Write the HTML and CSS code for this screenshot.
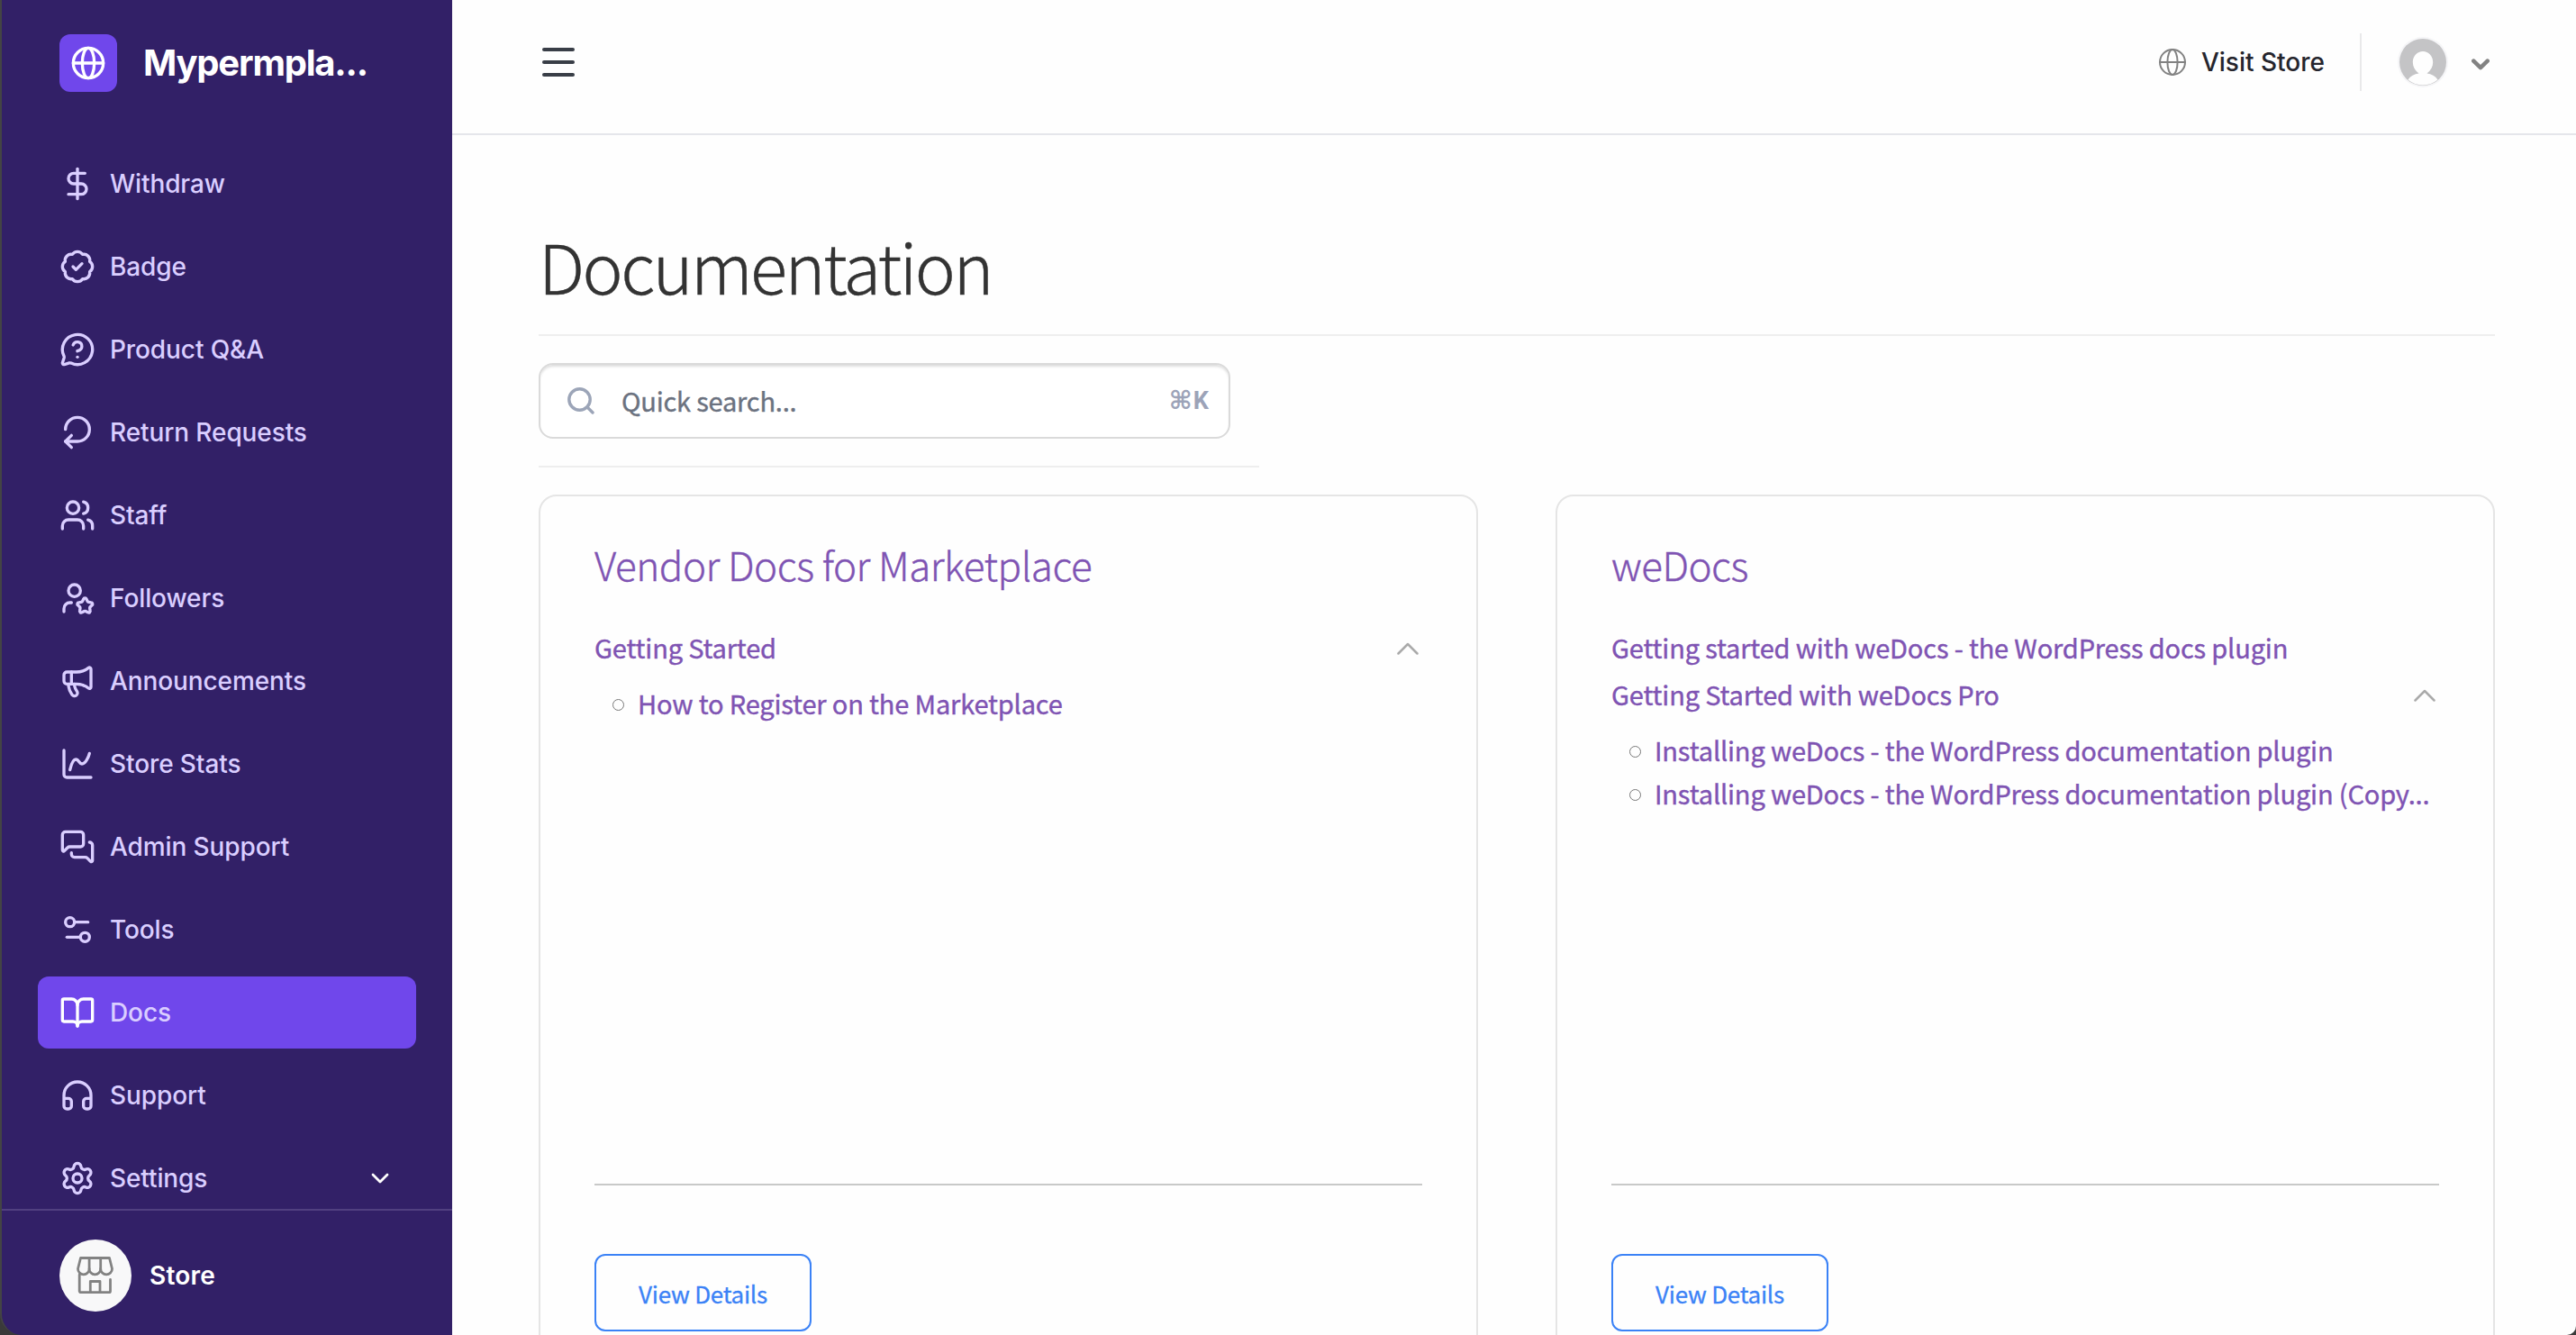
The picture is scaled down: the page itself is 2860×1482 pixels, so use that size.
FILE: index.html
```html
<!DOCTYPE html>
<html lang="en">
<head>
    <meta charset="UTF-8">
    <meta name="viewport" content="width=device-width, initial-scale=1.0">
    <title>Documentation</title>
    <link rel="stylesheet" href="styles.css">
</head>
<body>

    <div class="app">
        <aside class="sidebar">
            <div class="brand">
                <span class="brand-logo">
                    <svg class="icon" viewBox="0 0 24 24"><circle cx="12" cy="12" r="10"/><ellipse cx="12" cy="12" rx="4" ry="10"/><path d="M2 12h20"/></svg>
                </span>
                <span class="brand-name">Mypermpla...</span>
            </div>

            <nav class="menu">
                <a class="menu-item" href="#">
                    <svg class="icon" viewBox="0 0 24 24"><path d="M12 2v20"/><path d="M17 5H9.500a3.500 3.500 0 0 0 0 7h5a3.500 3.500 0 0 1 0 7H6"/></svg>
                    <span>Withdraw</span>
                </a>
                <a class="menu-item" href="#">
                    <svg class="icon" viewBox="0 0 24 24"><path d="M3.850 8.620a4 4 0 0 1 4.780-4.770 4 4 0 0 1 6.740 0 4 4 0 0 1 4.780 4.780 4 4 0 0 1 0 6.740 4 4 0 0 1-4.770 4.780 4 4 0 0 1-6.750 0 4 4 0 0 1-4.780-4.770 4 4 0 0 1 0-6.760Z"/><path d="m9 12 2 2 4-4"/></svg>
                    <span>Badge</span>
                </a>
                <a class="menu-item" href="#">
                    <svg class="icon" viewBox="0 0 24 24"><path d="M2.992 16.342a2 2 0 0 1 .094 1.167l-1.065 3.290a1 1 0 0 0 1.236 1.168l3.413-.998a2 2 0 0 1 1.099.092 10 10 0 1 0-4.777-4.719"/><path d="M9.090 9a3 3 0 0 1 5.830 1c0 2-3 3-3 3"/><path d="M12 17h.01"/></svg>
                    <span>Product Q&amp;A</span>
                </a>
                <a class="menu-item" href="#">
                    <svg class="icon" viewBox="0 0 24 24"><path d="M4 10a8 8 0 1 1 8 8H4"/><path d="m8 22-4-4 4-4"/></svg>
                    <span>Return Requests</span>
                </a>
                <a class="menu-item" href="#">
                    <svg class="icon" viewBox="0 0 24 24"><path d="M16 21v-2a4 4 0 0 0-4-4H6a4 4 0 0 0-4 4v2"/><circle cx="9" cy="7" r="4"/><path d="M22 21v-2a4 4 0 0 0-3-3.870"/><path d="M16 3.130a4 4 0 0 1 0 7.750"/></svg>
                    <span>Staff</span>
                </a>
                <a class="menu-item" href="#">
                    <svg class="icon" viewBox="0 0 24 24"><path d="M16.051 12.616a1 1 0 0 1 1.909.024l.737 1.452a1 1 0 0 0 .737.535l1.634.256a1 1 0 0 1 .588 1.806l-1.172 1.168a1 1 0 0 0-.282.866l.259 1.613a1 1 0 0 1-1.541 1.134l-1.465-.75a1 1 0 0 0-.912 0l-1.465.75a1 1 0 0 1-1.539-1.133l.258-1.613a1 1 0 0 0-.282-.866l-1.156-1.153a1 1 0 0 1 .572-1.822l1.633-.256a1 1 0 0 0 .737-.535z"/><path d="M8 15H7a4 4 0 0 0-4 4v2"/><circle cx="10" cy="7" r="4"/></svg>
                    <span>Followers</span>
                </a>
                <a class="menu-item" href="#">
                    <svg class="icon" viewBox="0 0 24 24"><path d="M11 6a13 13 0 0 0 8.400-2.800A1 1 0 0 1 21 4v12a1 1 0 0 1-1.600.8A13 13 0 0 0 11 14H5a2 2 0 0 1-2-2V8a2 2 0 0 1 2-2z"/><path d="M6 14a12 12 0 0 0 2.400 7.200 2 2 0 0 0 3.200-2.400A8 8 0 0 1 10 14"/><path d="M8 6v8"/></svg>
                    <span>Announcements</span>
                </a>
                <a class="menu-item" href="#">
                    <svg class="icon" viewBox="0 0 24 24"><path d="M3 3v16a2 2 0 0 0 2 2h16"/><path d="M7 16c.5-2 1.500-7 4-7 2 0 2 3 4 3 2.500 0 4.500-5 5-7"/></svg>
                    <span>Store Stats</span>
                </a>
                <a class="menu-item" href="#">
                    <svg class="icon" viewBox="0 0 24 24"><path d="M16 10a2 2 0 0 1-2 2H6.828a2 2 0 0 0-1.414.586l-2.202 2.202A.71.71 0 0 1 2 14.286V4a2 2 0 0 1 2-2h10a2 2 0 0 1 2 2z"/><path d="M20 9a2 2 0 0 1 2 2v10.286a.71.71 0 0 1-1.212.502l-2.202-2.202A2 2 0 0 0 17.172 19H10a2 2 0 0 1-2-2v-1"/></svg>
                    <span>Admin Support</span>
                </a>
                <a class="menu-item" href="#">
                    <svg class="icon" viewBox="0 0 24 24"><path d="M14 17H5"/><path d="M19 7h-9"/><circle cx="17" cy="17" r="3"/><circle cx="7" cy="7" r="3"/></svg>
                    <span>Tools</span>
                </a>
                <a class="menu-item active" href="#">
                    <svg class="icon" viewBox="0 0 24 24"><path d="M12 7v14"/><path d="M3 18a1 1 0 0 1-1-1V4a1 1 0 0 1 1-1h5a4 4 0 0 1 4 4 4 4 0 0 1 4-4h5a1 1 0 0 1 1 1v13a1 1 0 0 1-1 1h-6a3 3 0 0 0-3 3 3 3 0 0 0-3-3z"/></svg>
                    <span>Docs</span>
                </a>
                <a class="menu-item" href="#">
                    <svg class="icon" viewBox="0 0 24 24"><path d="M3 14h3a2 2 0 0 1 2 2v3a2 2 0 0 1-2 2H5a2 2 0 0 1-2-2v-7a9 9 0 0 1 18 0v7a2 2 0 0 1-2 2h-1a2 2 0 0 1-2-2v-3a2 2 0 0 1 2-2h3"/></svg>
                    <span>Support</span>
                </a>
                <a class="menu-item" href="#">
                    <svg class="icon" viewBox="0 0 24 24"><path d="M9.671 4.136a2.340 2.340 0 0 1 4.659 0 2.340 2.340 0 0 0 3.319 1.915 2.340 2.340 0 0 1 2.330 4.033 2.340 2.340 0 0 0 0 3.831 2.340 2.340 0 0 1-2.330 4.033 2.340 2.340 0 0 0-3.319 1.915 2.340 2.340 0 0 1-4.659 0 2.340 2.340 0 0 0-3.320-1.915 2.340 2.340 0 0 1-2.330-4.033 2.340 2.340 0 0 0 0-3.831A2.340 2.340 0 0 1 6.350 6.051a2.340 2.340 0 0 0 3.319-1.915"/><circle cx="12" cy="12" r="3"/></svg>
                    <span>Settings</span>
                    <svg class="menu-arrow" viewBox="0 0 20 12"><path d="m2 2 8 8 8-8"/></svg>
                </a>
            </nav>

            <div class="store">
                <span class="store-avatar">
                    <svg viewBox="0 0 42 42"><path d="M4.500 1.500h32l3 12a6.300 6.300 0 0 1-12.800 0 6.300 6.300 0 0 1-12.600 0 6.300 6.300 0 0 1-12.600 0z"/><path d="M14.100 1.500v12M26.700 1.500v12"/><path d="M3.200 20v18.200a1.500 1.500 0 0 0 1.500 1.500h31.300a1.500 1.500 0 0 0 1.500-1.500V25.500"/><path d="M15.300 39.700V27.500h10.700v12.200"/></svg>
                </span>
                <span class="store-name">Store</span>
            </div>
        </aside>

        <div class="page">
            <header class="topbar">
                <button class="menu-toggle" aria-label="Toggle menu"><span></span><span></span><span></span></button>
                <div class="topbar-right">
                    <a class="visit" href="#">
                        <svg class="icon" viewBox="0 0 30 30"><circle cx="15" cy="15" r="14"/><ellipse cx="15" cy="15" rx="5.600" ry="14"/><path d="M1 15h28"/></svg>
                        <span>Visit Store</span>
                    </a>
                    <div class="account">
                        <svg class="avatar" viewBox="0 0 56 56"><circle class="avatar-ring" cx="28" cy="28" r="28"/><circle class="avatar-bg" cx="28" cy="28" r="26"/><path class="avatar-user" d="M23.500 40.500C19 37 16.800 33 16.800 28c0-7 5-12 11.200-12s11.200 5 11.200 12c0 5-2.200 9-6.700 12.500 5 .8 9.500 3 12 7A26 26 0 0 1 11.500 47.500c2.500-4 7-6.200 12-7z"/></svg>
                        <svg class="account-arrow" viewBox="0 0 20 13"><path d="m2.300 2.600 7.700 7.500 7.700-7.500"/></svg>
                    </div>
                </div>
            </header>

            <main class="content">
                <h1 class="page-title">Documentation</h1>

                <div class="search">
                    <div class="search-box">
                        <svg class="search-icon" viewBox="0 0 30 30"><circle cx="13.500" cy="13.500" r="11.700"/><path d="m22 22 6 6"/></svg>
                        <span class="search-text">Quick search...</span>
                        <kbd class="search-key"><span>&#8984;</span>K</kbd>
                    </div>
                </div>

                <div class="docs">
                    <article class="card">
                        <h2><a href="#">Vendor Docs for Marketplace</a></h2>
                        <div class="card-body">
                            <div class="section-row">
                                <a href="#">Getting Started</a>
                                <svg class="chevron" viewBox="0 0 24 14"><path d="m1.500 12.500 10.500-10.500 10.500 10.500"/></svg>
                            </div>
                            <ul class="articles">
                                <li><a href="#">How to Register on the Marketplace</a></li>
                            </ul>
                        </div>
                        <div class="card-footer">
                            <a class="btn" href="#">View Details</a>
                        </div>
                    </article>

                    <article class="card">
                        <h2><a href="#">weDocs</a></h2>
                        <div class="card-body">
                            <div class="section-row">
                                <a href="#">Getting started with weDocs - the WordPress docs plugin</a>
                            </div>
                            <div class="section-row">
                                <a href="#">Getting Started with weDocs Pro</a>
                                <svg class="chevron" viewBox="0 0 24 14"><path d="m1.500 12.500 10.500-10.500 10.500 10.500"/></svg>
                            </div>
                            <ul class="articles">
                                <li><a href="#">Installing weDocs - the WordPress documentation plugin</a></li>
                                <li><a href="#">Installing weDocs - the WordPress documentation plugin (Copy...</a></li>
                            </ul>
                        </div>
                        <div class="card-footer">
                            <a class="btn" href="#">View Details</a>
                        </div>
                    </article>
                </div>
            </main>
        </div>
    </div>

</body>
</html>
```
FILE: styles.css
```css
/* Basic reset */
* {
    margin: 0;
    padding: 0;
    box-sizing: border-box;
}

body {
    font-family: Inter, sans-serif;
    background-color: #3a3a3a;
    overflow: hidden;
}

a {
    text-decoration: none;
    color: inherit;
}

ul {
    list-style-type: none;
}

svg {
    display: block;
    flex-shrink: 0;
    fill: none;
    stroke: currentColor;
    stroke-linecap: round;
    stroke-linejoin: round;
}

.app {
    display: flex;
    height: 1482px;
    border-left: 2px solid #444;
    border-radius: 0 0 10px 24px;
    overflow: hidden;
}

/* Sidebar */
.sidebar {
    display: flex;
    flex-direction: column;
    width: 500px;
    flex-shrink: 0;
    background-color: #322067;
    color: #daceff;
}

.icon {
    width: 40px;
    height: 40px;
    stroke-width: 2;
}

.brand {
    display: flex;
    align-items: center;
    gap: 29px;
    padding: 38px 64px 0;
}

.brand-logo {
    display: flex;
    align-items: center;
    justify-content: center;
    width: 64px;
    height: 64px;
    border-radius: 12px;
    background-color: #7047eb;
    color: #fff;
}

.brand-name {
    color: #fff;
    font-size: 40px;
    font-weight: 700;
    letter-spacing: -1.2px;
    line-height: 64px;
    white-space: nowrap;
}

.menu {
    display: flex;
    flex-direction: column;
    gap: 12px;
    height: 1240px;
    padding: 62px 40px 0;
    overflow: hidden;
}

.menu-item {
    display: flex;
    align-items: center;
    gap: 16px;
    height: 80px;
    flex-shrink: 0;
    padding: 0 30px 0 24px;
    border-radius: 12px;
    font-size: 28px;
    font-weight: 500;
    letter-spacing: -0.1px;
}

.menu-item.active {
    background-color: #7047eb;
}

.menu-item.active .icon {
    color: #fff;
}

.menu-arrow {
    width: 20px;
    height: 12px;
    margin-left: auto;
    color: #fff;
    stroke-width: 2.8;
}

.store {
    display: flex;
    align-items: center;
    gap: 20px;
    flex: 1;
    padding: 6px 64px 0;
    border-top: 2px solid #514080;
}

.store-avatar {
    display: flex;
    align-items: center;
    justify-content: center;
    width: 80px;
    height: 80px;
    border-radius: 50%;
    background-color: #f8f8f9;
    color: #828282;
}

.store-avatar svg {
    width: 42px;
    height: 42px;
    stroke-width: 2.8;
}

.store-name {
    color: #fff;
    font-size: 28px;
    font-weight: 600;
    letter-spacing: 0.2px;
}

/* Top bar */
.page {
    flex: 1;
    min-width: 0;
    background-color: #fefefe;
}

.topbar {
    display: flex;
    justify-content: space-between;
    height: 150px;
    padding: 37px 96px 0 100px;
    border-bottom: 2px solid #e5e6eb;
}

.menu-toggle {
    display: flex;
    flex-direction: column;
    gap: 10px;
    width: 36px;
    margin-top: 16px;
    border: none;
    background: none;
    cursor: pointer;
}

.menu-toggle span {
    height: 4px;
    border-radius: 2px;
    background-color: #393e47;
}

.topbar-right {
    display: flex;
    height: 64px;
}

.visit {
    display: flex;
    align-items: center;
    gap: 17px;
    padding-right: 39px;
    border-right: 2px solid #e9e9ea;
    color: #25252d;
    font-size: 28px;
    font-weight: 500;
}

.visit .icon {
    width: 30px;
    height: 30px;
    color: #828282;
}

.account {
    display: flex;
    align-items: center;
    gap: 26px;
    padding-left: 40px;
}

.avatar {
    width: 56px;
    height: 56px;
    stroke: none;
}

.avatar-ring {
    fill: #f5f5f7;
}

.avatar-bg {
    fill: #c4c4c6;
}

.avatar-user {
    fill: #fefefe;
}

.account-arrow {
    width: 20px;
    height: 13px;
    margin-top: 4px;
    color: #828282;
    stroke-width: 4.5;
}

/* Documentation */
.content {
    padding: 94px 90px 0 96px;
    font-family: "Noto Sans CJK JP", "Noto Sans CJK SC", sans-serif;
}

.page-title {
    height: 129px;
    border-bottom: 2px solid #eee;
    color: #333;
    font-size: 76px;
    font-weight: 300;
    letter-spacing: -2.5px;
    line-height: 100px;
    -webkit-text-stroke: 0.4px;
}

.search {
    width: 800px;
    padding: 30px 32px 30px 0;
    border-bottom: 2px solid #eee;
}

.search-box {
    display: flex;
    align-items: center;
    height: 84px;
    padding: 0 22px 0 30px;
    border: 2px solid #dadada;
    border-radius: 16px;
    box-shadow: inset 0 3px 3px -1px #ddd;
    background-color: #fff;
}

.search-icon {
    width: 30px;
    height: 30px;
    color: #9ca5b8;
    stroke-width: 3.4;
}

.search-text {
    margin-left: 30px;
    padding-bottom: 3px;
    color: #6b7280;
    font-size: 29px;
    letter-spacing: -0.2px;
    -webkit-text-stroke: 0.4px;
}

.search-key {
    display: flex;
    align-items: center;
    gap: 1px;
    margin-left: auto;
    color: #9ca3b8;
    font-family: Roboto, "DejaVu Sans", sans-serif;
    font-size: 27px;
    font-weight: 700;
    line-height: 32px;
}

.search-key span {
    font-size: 28px;
}

.docs {
    display: grid;
    grid-template-columns: repeat(2, minmax(0, 1fr));
    gap: 86px;
    margin-top: 30px;
}

.card {
    height: 1040px;
    padding: 45px 60px;
    border: 2px solid #e5e5e5;
    border-radius: 20px;
    color: #7f54b3;
}

.card h2 {
    font-size: 44px;
    font-weight: 300;
    letter-spacing: -0.5px;
    line-height: 60px;
    -webkit-text-stroke: 0.4px;
}

.card-body {
    height: 658px;
    padding-top: 36px;
    font-size: 29px;
    letter-spacing: -0.16px;
    -webkit-text-stroke: 0.4px;
}

.section-row {
    display: flex;
    align-items: center;
    justify-content: space-between;
    height: 52px;
}

.chevron {
    width: 24px;
    height: 14px;
    margin: 4px 4px 0 0;
    color: #aaa;
    stroke-width: 2.5;
}

.articles {
    margin-top: 12px;
    padding-left: 20px;
}

.articles li {
    display: flex;
    align-items: center;
    gap: 15px;
    height: 48px;
    white-space: nowrap;
}

.articles li::before {
    content: "";
    width: 11px;
    height: 11px;
    margin-top: 5px;
    border: 1.5px solid #777;
    border-radius: 50%;
}

.card-footer {
    padding-top: 76px;
    border-top: 2px solid #c8c9c8;
}

.btn {
    display: inline-flex;
    align-items: center;
    justify-content: center;
    width: 241px;
    height: 86px;
    border: 2px solid #3b82f6;
    border-radius: 12px;
    color: #3b82f6;
    font-size: 26px;
    letter-spacing: -0.25px;
    -webkit-text-stroke: 0.3px;
}
```
